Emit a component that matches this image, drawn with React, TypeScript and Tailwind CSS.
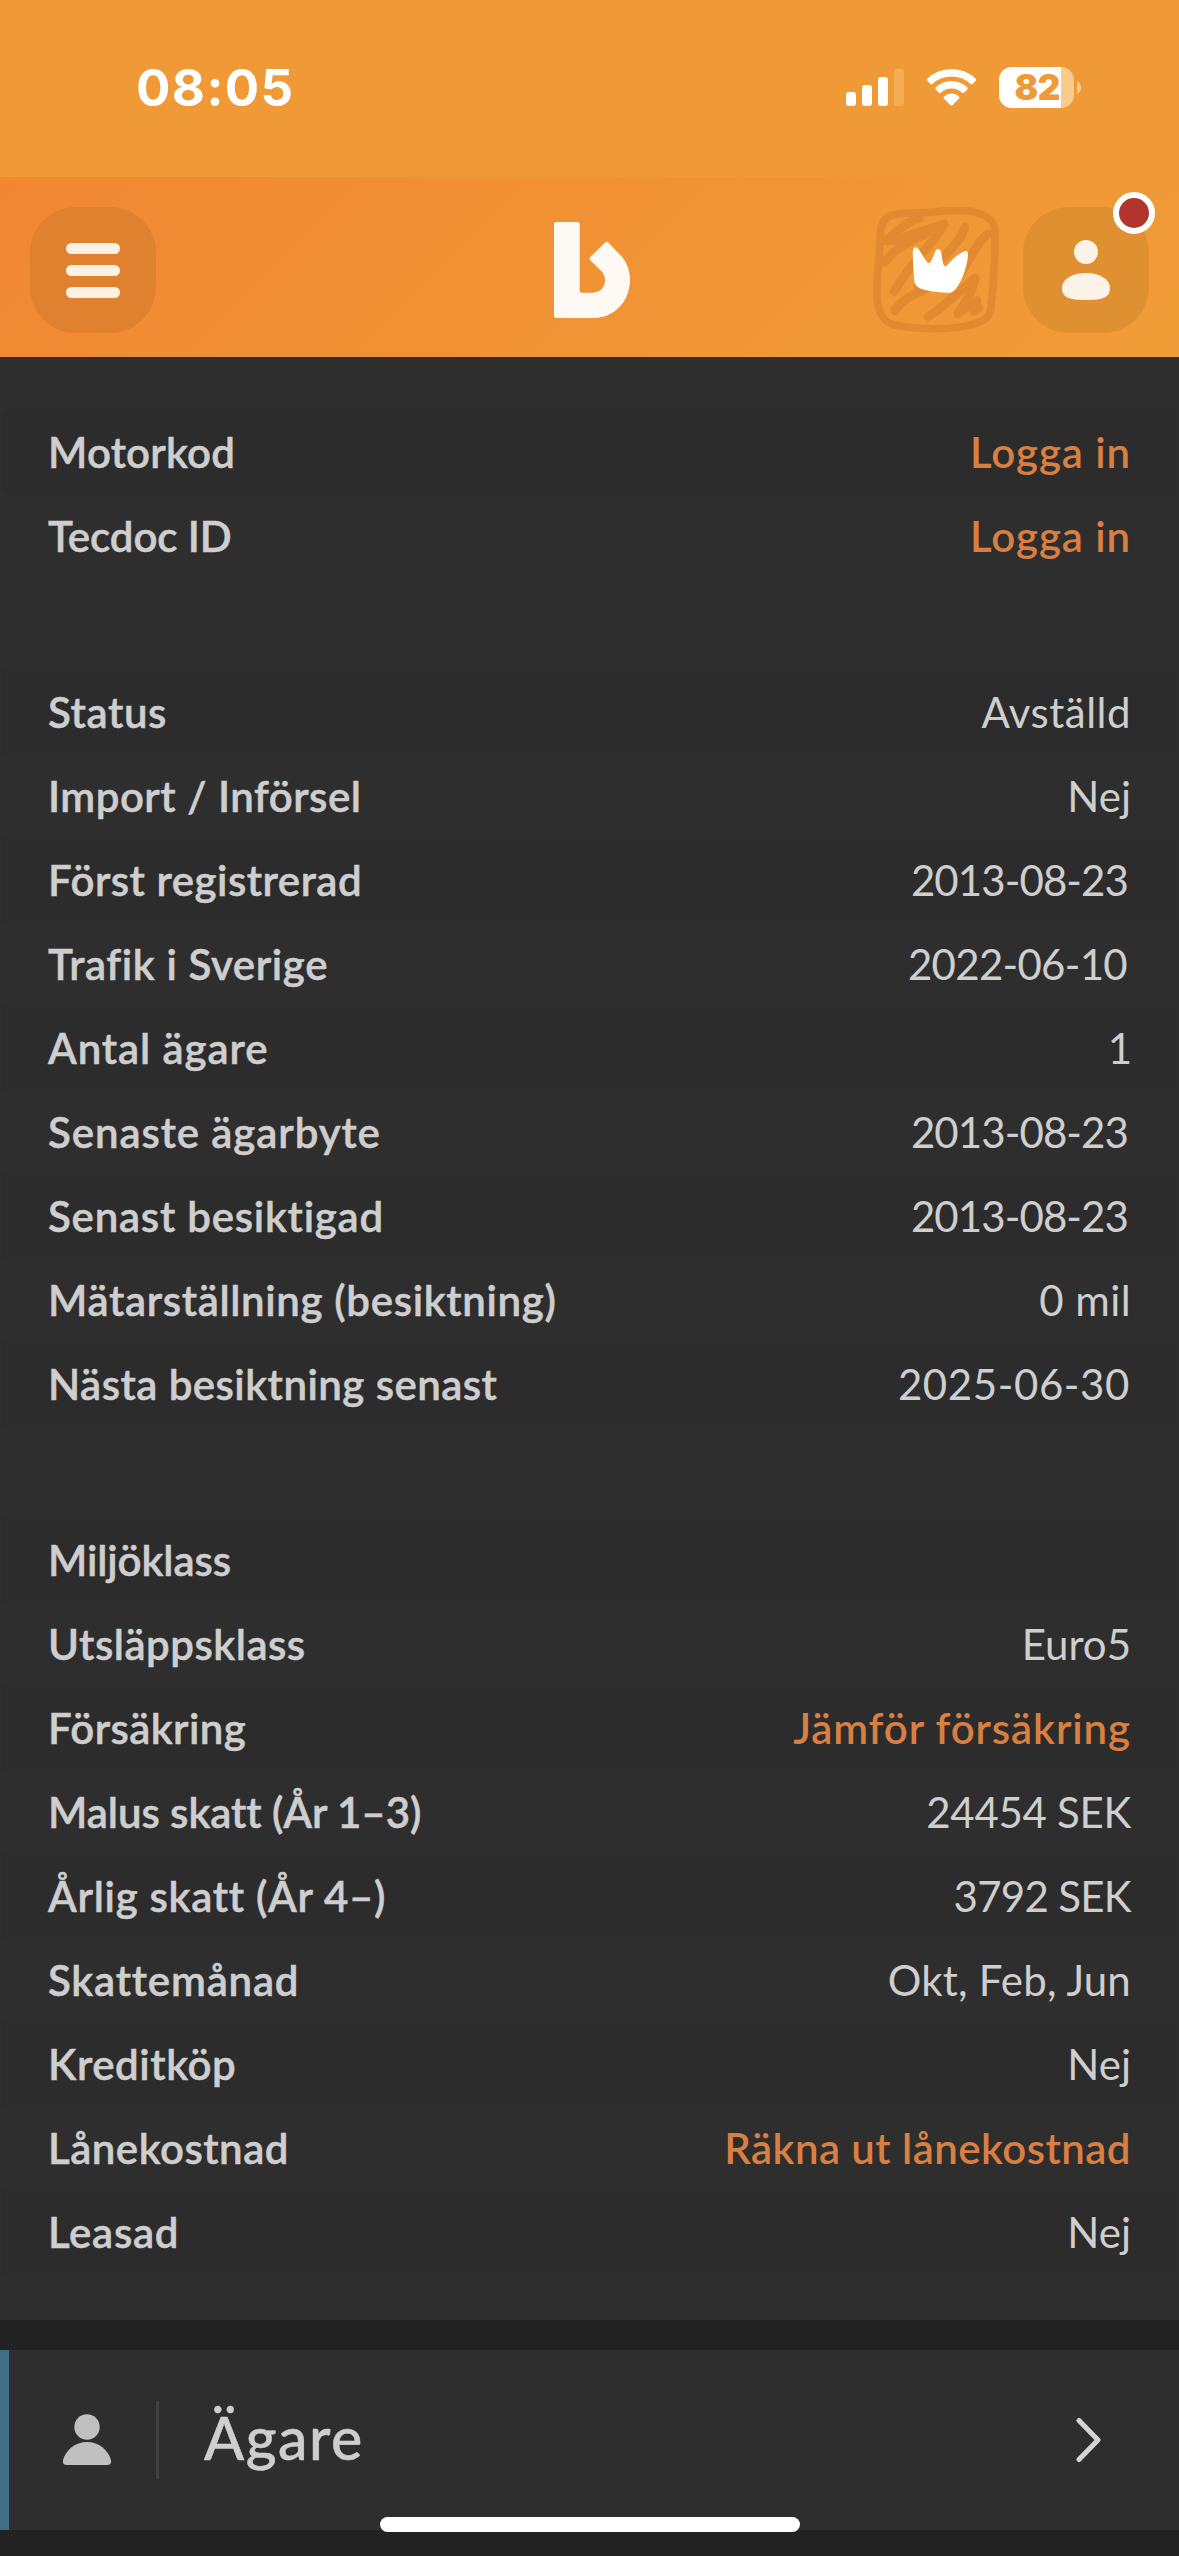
type Row = {
  label: string;
  labelSpacing?: string;
  value?: string;
  valueSpacing?: string;
  link?: boolean;
};

const groups: Row[][] = [
  [
    { label: "Motorkod", labelSpacing: "tracking-[0.2px]", value: "Logga in", valueSpacing: "tracking-[0.9px]", link: true },
    { label: "Tecdoc ID", labelSpacing: "tracking-[-0.1px]", value: "Logga in", valueSpacing: "tracking-[0.9px]", link: true },
  ],
  [
    { label: "Status", labelSpacing: "tracking-[0.6px]", value: "Avställd", valueSpacing: "tracking-[0.5px]" },
    { label: "Import / Införsel", labelSpacing: "tracking-[0.5px]", value: "Nej" },
    { label: "Först registrerad", labelSpacing: "tracking-[0.5px]", value: "2013-08-23", valueSpacing: "tracking-[-0.9px] mr-[3px]" },
    { label: "Trafik i Sverige", labelSpacing: "tracking-[0.6px]", value: "2022-06-10", valueSpacing: "tracking-[-0.7px] mr-[4px]" },
    { label: "Antal ägare", labelSpacing: "tracking-[0.9px]", value: "1", valueSpacing: "mr-[-1px]" },
    { label: "Senaste ägarbyte", labelSpacing: "tracking-[0.9px]", value: "2013-08-23", valueSpacing: "tracking-[-0.9px] mr-[3px]" },
    { label: "Senast besiktigad", labelSpacing: "tracking-[0.75px]", value: "2013-08-23", valueSpacing: "tracking-[-0.9px] mr-[3px]" },
    { label: "Mätarställning (besiktning)", labelSpacing: "tracking-[0.65px]", value: "0 mil", valueSpacing: "tracking-[0.4px]" },
    { label: "Nästa besiktning senast", labelSpacing: "tracking-[0.45px]", value: "2025-06-30", valueSpacing: "tracking-[0.6px] mr-[1px]" },
  ],
  [
    { label: "Miljöklass", labelSpacing: "tracking-[-0.1px]" },
    { label: "Utsläppsklass", labelSpacing: "tracking-[0.5px]", value: "Euro5" },
    { label: "Försäkring", labelSpacing: "tracking-[0.4px]", value: "Jämför försäkring", valueSpacing: "tracking-[0.9px]", link: true },
    { label: "Malus skatt (År 1–3)", labelSpacing: "tracking-[-0.05px]", value: "24454 SEK", valueSpacing: "tracking-[-0.3px]" },
    { label: "Årlig skatt (År 4–)", labelSpacing: "tracking-[0.7px]", value: "3792 SEK", valueSpacing: "tracking-[-0.7px]" },
    { label: "Skattemånad", labelSpacing: "tracking-[0.8px]", value: "Okt, Feb, Jun", valueSpacing: "tracking-[0.2px]" },
    { label: "Kreditköp", labelSpacing: "tracking-[0.55px]", value: "Nej" },
    { label: "Lånekostnad", labelSpacing: "tracking-[0.5px]", value: "Räkna ut lånekostnad", valueSpacing: "tracking-[0.45px]", link: true },
    { label: "Leasad", labelSpacing: "tracking-[0.7px]", value: "Nej" },
  ],
];

function StatusBar() {
  return (
    <div className="flex h-[177px] items-start justify-between bg-[#f09a37] pl-[136px] pr-[98px] pt-[58px] text-white">
      <span className="font-['Inter',sans-serif] text-[51px] leading-[60px] font-bold tracking-[1.4px]">08:05</span>
      <div className="flex items-center pt-[9px]">
        <svg className="h-[41px] w-[58px]" viewBox="0 0 58 41" fill="#fff">
          <rect x="0" y="25" width="10" height="14" rx="3" />
          <rect x="16" y="18" width="10" height="21" rx="3" />
          <rect x="32" y="10" width="10" height="29" rx="3" />
          <rect x="48" y="2" width="10" height="37" rx="3" fill="#f4ae55" />
        </svg>
        <svg className="ml-[22px] h-[41px] w-[51px]" viewBox="0 0 51 41">
          <path d="M1 13.500L4.500 17Q5.500 17.700 6.500 17A27.500 27.500 0 0 1 44.500 17Q45.500 17.700 46.500 17L50 13.500Q50.500 12.500 49.800 11.800A35 35 0 0 0 1.200 11.800Q.5 12.500 1 13.500Z" fill="#fff" />
          <path d="M9.500 22.300L13 25.800Q14 26.500 15 25.700A15.500 15.500 0 0 1 36 25.700Q37 26.500 38 25.800L41.500 22.300Q42.200 21.300 41.400 20.500A23 23 0 0 0 9.600 20.500Q8.800 21.300 9.500 22.300Z" fill="#fff" />
          <path d="M18 29.500A11 11 0 0 1 33 29.500Q33.800 30.500 33 31.400L26.500 38.200Q25.500 39 24.500 38.200L18 31.400Q17.200 30.500 18 29.500Z" fill="#fff" />
        </svg>
        <div className="ml-[22px] flex h-[41px] w-[75px] overflow-hidden rounded-[13px] bg-[#f6cb8c]">
          <div className="flex w-[62px] items-center justify-end bg-white pr-[1px] font-['Inter',sans-serif] text-[35px] font-black tracking-[-0.5px] text-[#f09a37]">
            82
          </div>
        </div>
        <svg className="ml-[3px] h-[13px] w-[4px]" viewBox="0 0 4 13">
          <path d="M0 0Q4 2 4 6.500Q4 11 0 13Z" fill="#f6cb8c" />
        </svg>
      </div>
    </div>
  );
}

function Logo() {
  return (
    <svg className="h-[96px] w-[76px]" viewBox="102 66 228 288" fill="#fff9f3">
      <path d="M109 66H172Q179 66 179 73V270Q179 278 187 278H218C241 278 255 261 255 241C255 229 251 220 243 212L210 180Q207 176 210 172L256 127Q260 123 264 127L300 164C320 184 330 210 330 239C330 304 283 354 218 354H109Q102 354 102 347V73Q102 66 109 66Z" />
    </svg>
  );
}

function CrownButton() {
  return (
    <svg className="h-[126px] w-[126px]" viewBox="99 111 378 378">
      <g fill="none" stroke="#e18a30" strokeWidth="23" strokeLinecap="round" strokeLinejoin="round">
        <path d="M188 130C235 127 260 131 300 124C350 119 400 122 428 134C455 147 464 160 465 190C465 270 460 350 453 410C449 444 435 452 395 464C335 480 240 480 160 464C128 455 112 420 111 375C110 320 120 240 122 185C126 145 145 133 188 130Z" />
        <path strokeWidth="27" d="M238 145C200 155 170 185 140 212C180 215 230 185 312 162C300 200 215 270 163 365M135 277C170 225 220 215 265 185M374 172C360 225 300 262 235 350M443 192C400 225 380 300 330 350M165 422C190 380 230 375 275 345M264 440C300 420 350 370 405 325C400 360 375 400 353 431C370 420 395 400 411 391L403 423L416 413" />
      </g>
      <path
        d="M219 240C221 229 232 229 237 239L258 272C264 282 270 281 275 270L286 244C290 234 300 235 303 245L309 279C312 291 318 291 325 283C340 264 355 252 370 245C380 240 385 244 384 256C382 290 365 335 348 356C339 367 331 369 318 368C290 366 262 363 243 356C228 350 223 341 222 328C221 300 217 265 219 240Z"
        fill="#fff"
      />
    </svg>
  );
}

function Header() {
  return (
    <header className="grid h-[180px] grid-cols-[1fr_auto_1fr] items-center bg-[linear-gradient(135deg,#f18733_0%,#f09234_45%,#f09d38_100%)] px-[30px] pt-[6px]">
      <div className="flex h-[126px] w-[126px] flex-col items-center justify-center gap-[11px] rounded-[46px] bg-[#df812f]">
        <span className="h-[11px] w-[54px] rounded-full bg-[#fbf1e4]" />
        <span className="h-[11px] w-[54px] rounded-full bg-[#fbf1e4]" />
        <span className="h-[11px] w-[54px] rounded-full bg-[#fbf1e4]" />
      </div>
      <div className="ml-[5px]">
        <Logo />
      </div>
      <div className="flex justify-end gap-6">
        <CrownButton />
        <div className="relative flex h-[126px] w-[126px] items-center justify-center rounded-[46px] bg-[#df9132]">
          <svg className="h-[60px] w-[48px]" viewBox="0 0 48 60" fill="#fcf2e7">
            <circle cx="24" cy="12" r="12" />
            <path d="M24 33C37 33 48 39 48 48C48 57 42 60 24 60C6 60 0 57 0 48C0 39 11 33 24 33Z" />
          </svg>
          <span className="absolute -right-[6px] -top-[15px] h-[42px] w-[42px] rounded-full border-[6px] border-white bg-[#b1352d]" />
        </div>
      </div>
    </header>
  );
}

function DataRow({ label, labelSpacing = "", value, valueSpacing = "", link }: Row) {
  return (
    <div className="flex h-[84px] justify-between px-[45px] odd:bg-[#2c2c2c]">
      <span className={`font-semibold [-webkit-text-stroke:0.5px_#cecece] ${labelSpacing}`}>{label}</span>
      <span className={`${link ? "font-semibold text-[#d97f42]" : ""} ${valueSpacing}`}>{value}</span>
    </div>
  );
}

export default function App() {
  return (
    <div className="relative flex h-[2556px] w-[1179px] flex-col overflow-hidden bg-[#222222] font-['Lato',sans-serif] text-[#cecece]">
      <StatusBar />
      <Header />
      <main className="flex h-[1963px] flex-col gap-[92px] bg-[#2e2e2e] px-[3px] pt-[53px] text-[42px] leading-[84px] [font-variant-ligatures:none]">
        {groups.map((rows, i) => (
          <div key={i}>
            {rows.map((row) => (
              <DataRow key={row.label} {...row} />
            ))}
          </div>
        ))}
      </main>
      <section className="mt-[30px] flex h-[180px] items-center border-l-[9px] border-[#407088] bg-[#2e2e2e] pr-[78px]">
        <svg className="ml-[54px] h-[52px] w-[48px]" viewBox="0 0 48 52" fill="#c0c0c0">
          <circle cx="24" cy="13" r="12.7" />
          <path d="M24 28C36 28 45 36 48 46Q49 51 44 51H4Q-1 51 0 46C3 36 12 28 24 28Z" />
        </svg>
        <span className="ml-[45px] h-[78px] w-[3px] bg-[#404040]" />
        <span className="ml-[45px] grow pb-[4px] text-[59px] font-medium leading-[70px] tracking-[1.5px] [-webkit-text-stroke:0.5px_#cecece]">Ägare</span>
        <svg className="h-[46px] w-[25px]" viewBox="0 0 25 46" fill="none" stroke="#d4d4d4" strokeWidth="5" strokeLinecap="round" strokeLinejoin="round">
          <path d="M3 3.500L22 23L3 42.500" />
        </svg>
      </section>
      <div className="absolute bottom-[24px] left-[380px] h-[15px] w-[420px] rounded-full bg-white" />
    </div>
  );
}
